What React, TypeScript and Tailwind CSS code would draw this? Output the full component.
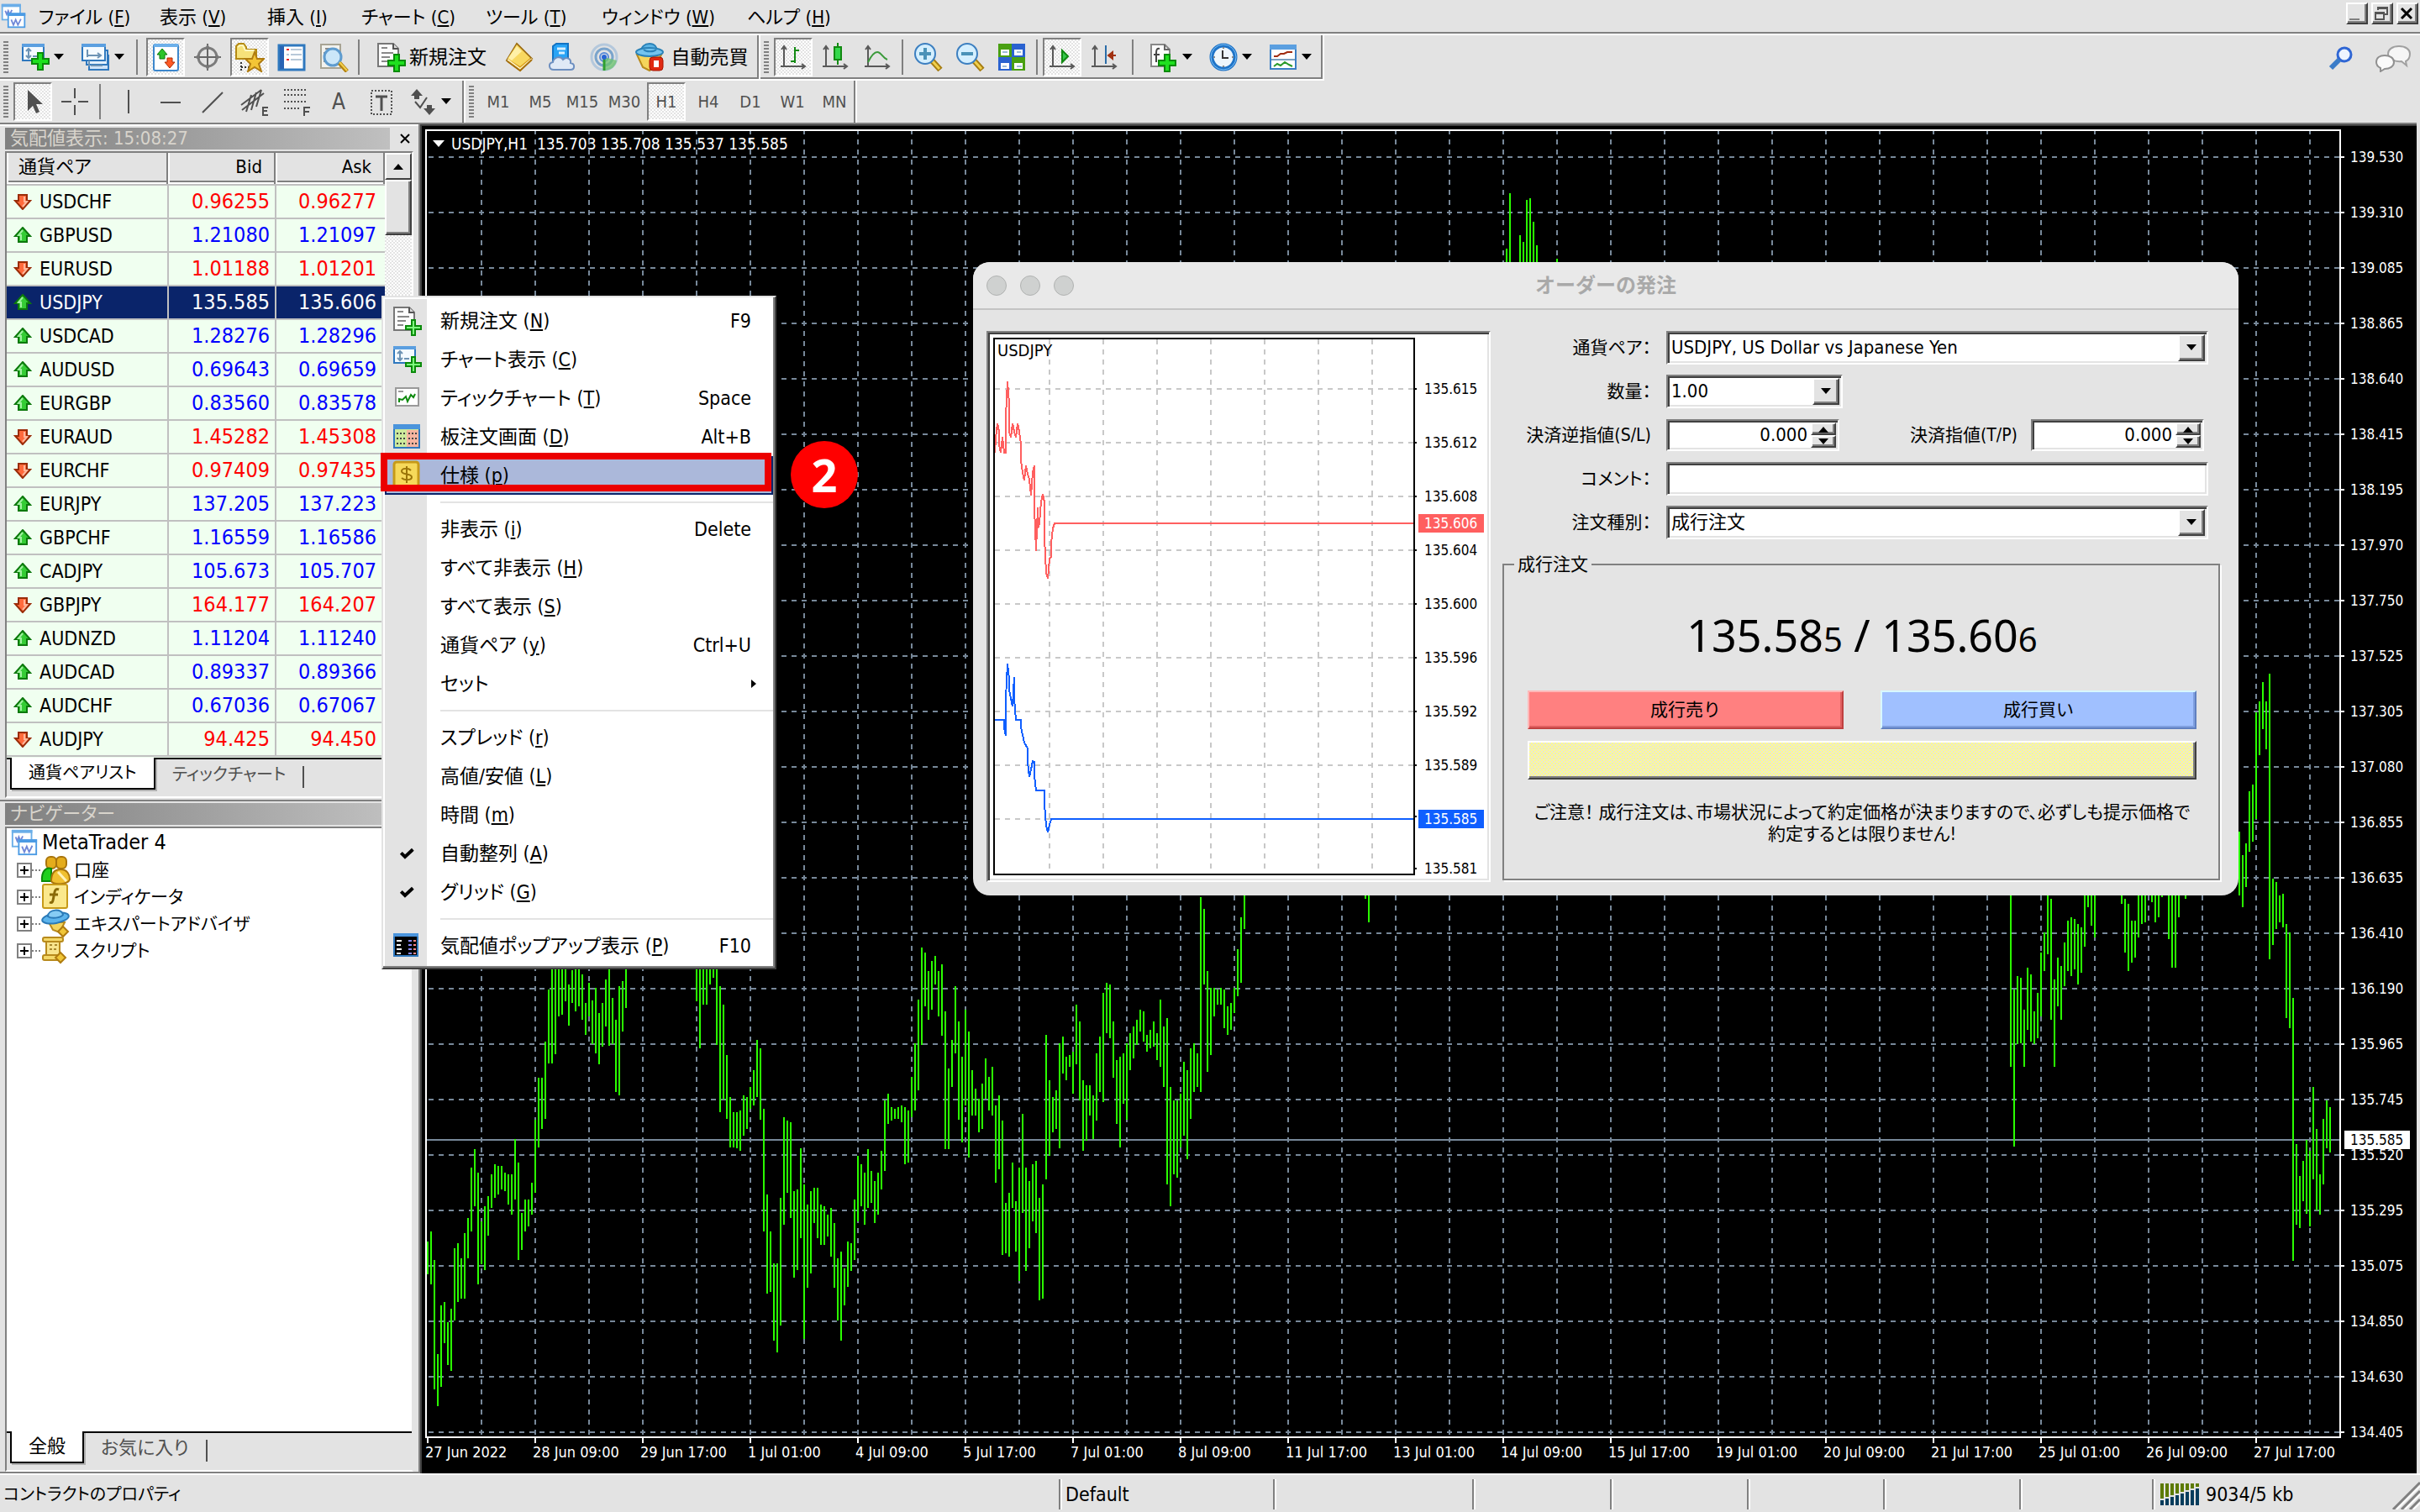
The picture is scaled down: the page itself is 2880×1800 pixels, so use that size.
import { useState } from 'react';
import type { ReactNode } from 'react';
import clsx from 'clsx';

type Quote = {
  symbol: string;
  bid: string;
  ask: string;
  up: boolean;
};

type MenuEntry = {
  label: string;
  hotkey?: string;
  shortcut?: string;
  icon?: ReactNode;
  active?: boolean;
  submenu?: boolean;
};

const quotes: Quote[] = [
  { symbol: 'USDCHF', bid: '0.96255', ask: '0.96277', up: false },
  { symbol: 'GBPUSD', bid: '1.21080', ask: '1.21097', up: true },
  { symbol: 'EURUSD', bid: '1.01188', ask: '1.01201', up: false },
  { symbol: 'USDJPY', bid: '135.585', ask: '135.606', up: true },
  { symbol: 'USDCAD', bid: '1.28276', ask: '1.28296', up: true },
  { symbol: 'AUDUSD', bid: '0.69643', ask: '0.69659', up: true },
  { symbol: 'EURGBP', bid: '0.83560', ask: '0.83578', up: true },
  { symbol: 'EURAUD', bid: '1.45282', ask: '1.45308', up: false },
  { symbol: 'EURCHF', bid: '0.97409', ask: '0.97435', up: false },
  { symbol: 'EURJPY', bid: '137.205', ask: '137.223', up: true },
  { symbol: 'GBPCHF', bid: '1.16559', ask: '1.16586', up: true },
  { symbol: 'CADJPY', bid: '105.673', ask: '105.707', up: true },
  { symbol: 'GBPJPY', bid: '164.177', ask: '164.207', up: false },
  { symbol: 'AUDNZD', bid: '1.11204', ask: '1.11240', up: true },
  { symbol: 'AUDCAD', bid: '0.89337', ask: '0.89366', up: true },
  { symbol: 'AUDCHF', bid: '0.67036', ask: '0.67067', up: true },
  { symbol: 'AUDJPY', bid: '94.425', ask: '94.450', up: false },
];

const prices = [
  '139.530', '139.310', '139.085', '138.865', '138.640', '138.415', '138.195', '137.970',
  '137.750', '137.525', '137.305', '137.080', '136.855', '136.635', '136.410', '136.190',
  '135.965', '135.745', '135.520', '135.295', '135.075', '134.850', '134.630', '134.405',
];

const times = [
  '27 Jun 2022', '28 Jun 09:00', '29 Jun 17:00', '1 Jul 01:00', '4 Jul 09:00', '5 Jul 17:00',
  '7 Jul 01:00', '8 Jul 09:00', '11 Jul 17:00', '13 Jul 01:00', '14 Jul 09:00', '15 Jul 17:00',
  '19 Jul 01:00', '20 Jul 09:00', '21 Jul 17:00', '25 Jul 01:00', '26 Jul 09:00', '27 Jul 17:00',
];

// high-low pairs, one bar every 4 units; "x" is the first bar, y = base + value / scale
const barRuns = [
  {
    x: 509, base: 1050, scale: 2.24,
    bars: '959-1047 932-1074 1007-1353 1258-1397 1128-1347 1120-1230 1173-1289 1137-1303 977-1169 963-1119 1003-1110 936-1110 896-1004 762-932 712-864 775-1074 905-1020 865-1034 838-944 780-868 753-842 757-833 757-820 775-824 780-860 780-886 685-847 748-1007 882-981 847-932 847-918 802-886 635-829 523-708 523-658 426-631 287-483 230-484 230-460 230-358 230-353 230-318 273-384 236-322 230-345 230-331 246-367 322-407 269-358 316-433 282-457 349-487 322-438 260-385 230-437 309-432 367-560 278-569 264-398 200-335',
  },
  {
    x: 829, base: 1050, scale: 2.24,
    bars: '200-318 200-443 200-327 200-327 200-273 200-255 200-434 278-613 327-581 461-632 573-707 613-707 613-711 609-717 569-676 573-658 547-605 501-596 421-573 443-635 604-932 833-1097 932-1092 1018-1223 1018-1254 842-1183 627-914 636-829 640-895 824-1056 820-1034 711-950 806-1219 860-1083 824-1043 815-909 815-950 860-968 865-968 887-945 869-998 909-1083 1003-1169 986-1222 1030-1129 959-1079 963-1038 847-1007 730-905 753-864 775-914 712-869 770-855 797-909 775-886 717-820 582-770 564-645 600-636 605-631 600-631 596-640 600-753 609-748 519-627 430-609 314-555 175-434 188-331 237-367 211-340 197-273 237-358 220-411 345-712 497-712 421-546 278-457 372-635 465-694 340-595 399-735 502-623 551-623 578-667 538-658 470-578 519-609 492-623 596-802 569-766 636-994 855-990 829-998 748-869 851-986 762-1065 618-882 762-1038 797-977 753-905 744-936 842-1115 806-1110 408-793 529-730 573-667 555-658 430-711 412-510 465-528 461-492 452-564 327-487 372-582 529-717 542-690 542-623 569-685 457-636 412-560 296-586 269-403 273-416 372-523 475-645 465-708 457-591 430-635 403-502 385-470 367-434 340-399 345-426 408-452 394-444 372-438 403-475 314-493 385-547 363-806 547-865 582-780 582-788 564-708 479-676 501-739 443-631 430-560 457-546 40-560 72-273 237-506 282-461 282-358 287-327 282-327 287-390 331-407 322-394 282-349 179-304 94-269 20-125',
  },
  { x: 1625, base: 1050, scale: 1, bars: '10-20 10-48' },
  { x: 1793, base: 200, scale: 3, bars: '288-350 90-350' },
  { x: 1809, base: 200, scale: 3, bars: '240-350 264-350 114-350 108-350 192-350 276-350' },
  { x: 1853, base: 200, scale: 3, bars: '324-350' },
  {
    x: 2393, base: 700, scale: 1.4255,
    bars: '500-812 681-948 659-774 661-773 716-812 644-750 656-770 718-774 687-764 619-727 585-650 500-621 527-733 664-812 627-710 641-733 602-676 564-650 559-658 562-647 570-673 576-653 500-609 500-542 500-573 500-593',
  },
  { x: 2525, base: 700, scale: 1.4255, bars: '500-536 527-619 536-650 564-636 564-627 500-593 500-570 500-567 500-510 500-533 500-567 500-559 500-524 500-510 500-596 500-644 500-644 500-559 500-510 500-527' },
  {
    x: 2665, base: 700, scale: 1.4255,
    bars: '413-522 453-542 433-507 345-447 334-430 211-392 192-284 160-239 192-273 145-630 493-606 499-579 522-567 519-576 570-730 585-747 696-1142 944-1080 998-1086 972-1041 936-1062 955-1083 847-1004 918-1056 995-1063 901-1012 870-951 881-958',
  },
];

const askTicks =
  '83,481 85,446 90,410 95,430 96,461 100,481 105,442 110,481 115,481 115,394 120,310 124,362 125,430 130,445 135,410 140,430 145,445 149,410 155,430 159,461 160,498 165,528 169,546 173,511 178,530 183,544 188,582 193,527 198,511 199,614 203,716 208,611 209,662 213,650 218,598 222,579 227,600 228,683 233,767 238,783 242,733 247,730 247,697 252,662 257,649 1304,649';
const bidTicks =
  '83,1120 110,1120 110,1137 115,1157 116,1068 120,985 125,1021 125,1050 130,1068 135,1088 139,1018 140,1068 145,1120 159,1120 160,1138 165,1156 170,1174 178,1188 179,1222 184,1256 189,1238 193,1218 198,1220 199,1254 203,1289 227,1289 228,1323 233,1374 238,1390 243,1372 247,1357 1304,1357';

const toTickPoints = (raw: string) =>
  raw
    .split(' ')
    .map((p) => {
      const [x, y] = p.split(',').map(Number);
      return `${Math.round(x / 2.45 - 34)},${Math.round(y / 2.0103 - 104)}`;
    })
    .join(' ');

/* ---------- icons ---------- */

const Svg = ({ size = 36, children }: { size?: number; children: ReactNode }) => (
  <svg width={size} height={size} viewBox="0 0 36 36" fill="none" className="shrink-0" aria-hidden="true">
    {children}
  </svg>
);

const Plus = ({ x, y, light }: { x: number; y: number; light?: boolean }) => (
  <path
    transform={`translate(${x} ${y})`}
    d={light ? 'M7 0h4v7h7v4h-7v7H7v-7H0V7h7z' : 'M7 0h6v7h7v6h-7v7H7v-7H0V7h7z'}
    fill={light ? '#7dff7d' : '#1fe01f'}
    stroke="#0a8a0a"
    strokeWidth="2"
  />
);

const WindowsIcon = ({ size = 36 }: { size?: number }) => (
  <Svg size={size}>
    <rect x="3" y="3" width="24" height="20" fill="#fff" stroke="#6aaee8" strokeWidth="2" />
    <path d="M2 4h26" stroke="#6aaee8" strokeWidth="4" />
    <path d="M7 11l2 5 2-5 2 5 3-6" stroke="#7088d8" strokeWidth="2" />
    <rect x="11" y="15" width="22" height="18" fill="#fff" stroke="#4c9be4" strokeWidth="2" />
    <path d="M10 16h24" stroke="#4c9be4" strokeWidth="4" />
    <path d="M15 23l3 7 3-7 3 7 4-8" stroke="#7088d8" strokeWidth="2" />
  </Svg>
);

const NewChartIcon = ({ light }: { light?: boolean }) => (
  <Svg>
    <rect x="3" y="3" width="25" height="19" fill="#f4faff" stroke="#2f78be" strokeWidth="2" />
    <path d="M2 4h27" stroke="#5b9fe0" strokeWidth="4" />
    <path d="M10 8v11M7 11l3-3 3 3M7 16l3 3 3-3M15 17h6" stroke="#6d93b4" strokeWidth="2" />
    <Plus x={light ? 17 : 14} y={light ? 15 : 13} light={light} />
  </Svg>
);

const ProfilesIcon = () => (
  <Svg>
    <rect x="10" y="16" width="23" height="17" fill="#cfe4f8" stroke="#2f78be" strokeWidth="2" />
    <rect x="7" y="10" width="25" height="17" fill="#e2f0fc" stroke="#2f78be" strokeWidth="2" />
    <rect x="2" y="3" width="27" height="19" fill="#f4faff" stroke="#2f78be" strokeWidth="2" />
    <path d="M1 4h29" stroke="#5b9fe0" strokeWidth="4" />
    <path d="M8 9v9M8 16h15M20 13l4 3-4 3M10 22v7M12 28h14" stroke="#6d93b4" strokeWidth="2" />
  </Svg>
);

const MarketIcon = () => (
  <Svg>
    <rect x="4" y="3" width="29" height="31" rx="2" fill="#fff" stroke="#3d87cc" strokeWidth="2" />
    <path d="M4 4h29" stroke="#6cb0ea" strokeWidth="4" />
    <path d="M14 8l6 7h-3v5h-6v-5H8z" fill="#2cc42c" stroke="#0a7a0a" />
    <path d="M23 31l-6-7h3v-5h6v5h3z" fill="#ff5a26" stroke="#b02a00" />
  </Svg>
);

const TargetIcon = () => (
  <Svg>
    <circle cx="18" cy="18" r="11" stroke="#7c7c7c" strokeWidth="3" />
    <path d="M18 2v32M2 18h32" stroke="#666" strokeWidth="2" />
    <path d="M18 2l3 6h-6zM18 34l3-6h-6zM2 18l6-3v6zM34 18l-6-3v6z" fill="#777" />
  </Svg>
);

const FavoritesIcon = () => (
  <Svg>
    <path d="M2 20V5l3-3h6l3 4v3h12v11z" fill="#f6e27a" stroke="#b48a14" strokeWidth="2" />
    <path d="M4 6l3-2h3l3 6h11" stroke="#fff7c0" strokeWidth="2" />
    <path d="M8 24v10M8 30h10" stroke="#333" strokeWidth="2" strokeDasharray="2 2" />
    <path d="M24 12l3 8h8l-6 6 3 9-8-5-8 5 3-9-6-6h8z" fill="#f3c536" stroke="#b07c10" strokeWidth="2" />
  </Svg>
);

const NotebookIcon = () => (
  <Svg>
    <rect x="3" y="4" width="30" height="29" fill="#fff" stroke="#2f78be" strokeWidth="3" />
    <rect x="4" y="5" width="5" height="27" fill="#2863b4" />
    <path d="M12 9h3M12 21h3" stroke="#e22" strokeWidth="2" />
    <path d="M17 9h13M17 15h13M17 21h13M12 15h3" stroke="#b8c8d8" strokeWidth="2" />
  </Svg>
);

const TesterIcon = () => (
  <Svg>
    <rect x="3" y="3" width="23" height="28" fill="#f2f2ee" stroke="#a8a494" strokeWidth="2" />
    <path d="M7 12v12M8 8h10" stroke="#8a8a8a" strokeWidth="2" />
    <circle cx="17" cy="18" r="10" fill="#c6e6fa" fillOpacity=".9" stroke="#5f9ccf" strokeWidth="3" />
    <path d="M25 25l9 10" stroke="#b4820e" strokeWidth="5" />
    <path d="M25 24l9 10" stroke="#f2d050" strokeWidth="2" />
  </Svg>
);

const NewOrderIcon = ({ light }: { light?: boolean }) => (
  <Svg>
    <path d="M3 2h18l6 6v21H3z" fill="#fcfcfc" stroke="#777" strokeWidth="2" />
    <path d="M21 2v6h6" fill="#ddd" stroke="#555" strokeWidth="2" />
    <path d="M7 7h7M7 13h14M7 18h10M7 23h7" stroke="#888" strokeWidth="2" />
    <Plus x={light ? 17 : 15} y={light ? 17 : 15} light={light} />
  </Svg>
);

const BookIcon = () => (
  <Svg>
    <path d="M14 2l18 18-14 14L2 22z" fill="#d89a14" stroke="#9a6a10" strokeWidth="2" />
    <path d="M14 3l16 16-12 10L3 20z" fill="#f8d860" />
    <path d="M14 5l6 6-12 11-4-3z" fill="#fff0a8" />
    <path d="M3 21l15 11 14-12" stroke="#fff3c0" strokeWidth="2" />
    <path d="M3 23l15 11 14-13" stroke="#a8700c" strokeWidth="2" />
  </Svg>
);

const CloudIcon = () => (
  <Svg>
    <path d="M7 5l4-3h14v20H7z" fill="#29a4f6" stroke="#1273c4" strokeWidth="2" />
    <path d="M12 8h10M14 13h7" stroke="#d8f0ff" strokeWidth="3" />
    <path d="M8 33c-6 0-7-8-1-9 1-6 9-8 12-3 4-4 10-1 9 4 6 1 5 8 0 8z" fill="#dfe9f6" stroke="#6d8fc0" strokeWidth="2" />
  </Svg>
);

const SignalIcon = () => (
  <Svg>
    <circle cx="18" cy="18" r="15" stroke="#b4c8dc" strokeWidth="3" />
    <circle cx="18" cy="18" r="10" stroke="#7aa4cc" strokeWidth="3" />
    <circle cx="18" cy="18" r="5" stroke="#5a8cd8" strokeWidth="2" />
    <path d="M18 18v16c8 0 14-5 15-12z" fill="#6cc46c" fillOpacity=".75" />
    <path d="M18 18v16" stroke="#2fa02f" strokeWidth="3" />
    <circle cx="18" cy="18" r="3" fill="#2a66d4" />
  </Svg>
);

const AutoTradeIcon = () => (
  <Svg>
    <path d="M3 15h29l-5 12-9 7-8-4z" fill="#f5d55c" stroke="#b88a1c" strokeWidth="2" />
    <path d="M8 11c0-5 4-9 10-9s9 4 9 9" fill="#5cb4e4" stroke="#2a82b8" strokeWidth="2" />
    <ellipse cx="18" cy="12" rx="16" ry="5" fill="#74c4ee" stroke="#2a82b8" strokeWidth="2" />
    <path d="M11 9c3 3 12 3 15 0" stroke="#2a82b8" strokeWidth="2" />
    <rect x="18" y="18" width="16" height="16" rx="4" fill="#e02a12" stroke="#a81400" />
    <rect x="23" y="22" width="6" height="8" fill="#fff" />
  </Svg>
);

const Axes = () => (
  <path d="M7 6v24M4 9l3-4 3 4M3 29h28M28 26l4 3-4 3" stroke="#595959" strokeWidth="2" />
);

const BarChartIcon = () => (
  <Svg>
    <Axes />
    <path d="M20 6v19M20 10h5M15 23h5" stroke="#128a12" strokeWidth="2" />
  </Svg>
);

const CandleIcon = () => (
  <Svg>
    <Axes />
    <path d="M21 1v26" stroke="#128a12" strokeWidth="2" />
    <rect x="17" y="6" width="8" height="15" fill="#35d84c" stroke="#128a12" strokeWidth="2" />
  </Svg>
);

const LineChartIcon = () => (
  <Svg>
    <Axes />
    <path d="M7 24c4-8 7-12 11-12 5 0 6 7 12 9" stroke="#3a9a3a" strokeWidth="2" />
  </Svg>
);

const ZoomIcon = ({ plus }: { plus?: boolean }) => (
  <Svg>
    <path d="M23 22l10 11" stroke="#a67c10" strokeWidth="7" />
    <path d="M23 22l9 10" stroke="#f0cf4c" strokeWidth="3" />
    <circle cx="15" cy="14" r="12" fill="#d4efff" stroke="#3c7fc0" strokeWidth="2" />
    <path d={plus ? 'M8 14h14M15 7v14' : 'M8 14h14'} stroke="#4a92b8" strokeWidth="4" />
  </Svg>
);

const TileIcon = () => (
  <Svg>
    <rect x="2" y="2" width="16" height="16" fill="#49a012" />
    <rect x="18" y="2" width="16" height="16" fill="#2a62d0" />
    <rect x="2" y="18" width="16" height="16" fill="#2a62d0" />
    <rect x="18" y="18" width="16" height="16" fill="#49a012" />
    <path d="M5 9h10v7H5zM21 9h10v7H21zM5 25h10v7H5zM21 25h10v7H21z" fill="#fff" />
    <path d="M7 12h6M24 12h5M7 29h5M24 29h6" stroke="#9cbcd8" strokeWidth="2" />
  </Svg>
);

const ScrollIcon = () => (
  <Svg>
    <Axes />
    <path d="M18 10v14l7-7z" fill="#35c84c" stroke="#128a12" strokeWidth="2" />
  </Svg>
);

const ShiftIcon = () => (
  <Svg>
    <Axes />
    <path d="M20 4v22" stroke="#2a6ca8" strokeWidth="2" />
    <path d="M32 16h-8M28 12l-5 4 5 4z" fill="#c03a10" stroke="#a03010" strokeWidth="2" />
  </Svg>
);

const IndicatorsIcon = () => (
  <Svg>
    <path d="M3 3h16l6 6v20H3z" fill="#fcfcfc" stroke="#888" strokeWidth="2" />
    <path d="M19 3v6h6" stroke="#666" strokeWidth="2" />
    <path d="M13 8c-4-1-4 3-4 6v10M6 15h7" stroke="#444" strokeWidth="2" />
    <Plus x={12} y={15} />
  </Svg>
);

const ClockIcon = () => (
  <Svg>
    <circle cx="18" cy="18" r="14" fill="#eef6fc" stroke="#1f74c8" strokeWidth="5" />
    <circle cx="18" cy="18" r="15" stroke="#7cc0f6" />
    <path d="M17 10v9h7" stroke="#333" strokeWidth="2" />
    <path d="M18 6v2M18 28v2M6 18h2M28 18h2" stroke="#888" strokeWidth="2" />
  </Svg>
);

const TemplateIcon = () => (
  <Svg>
    <rect x="3" y="4" width="30" height="28" fill="#fff" stroke="#3a7fc4" strokeWidth="2" />
    <path d="M2 6h32" stroke="#5b9fe0" strokeWidth="6" />
    <path d="M4 21h28" stroke="#7aa0c0" strokeWidth="2" />
    <path d="M7 17h4l4-3h4l4-2h6" stroke="#a02c10" strokeWidth="2" />
    <path d="M7 29l4-3 4 2 5-4 5 3 4 2" stroke="#2a9a2a" strokeWidth="2" />
  </Svg>
);

const TickIcon = () => (
  <Svg>
    <rect x="5" y="6" width="27" height="21" fill="#fff" stroke="#999" strokeWidth="2" />
    <path d="M8 10h6" stroke="#999" strokeWidth="2" />
    <path d="M9 23v-4l4 1 4-4 2 6 4-8 3 3 2-4" stroke="#0f8a0f" strokeWidth="2" />
  </Svg>
);

const DepthIcon = () => (
  <Svg>
    <rect x="3" y="4" width="30" height="27" fill="#cdeb9c" stroke="#2f78be" strokeWidth="2" />
    <rect x="18" y="10" width="14" height="20" fill="#f6b4a0" />
    <path d="M2 6h32" stroke="#4a94dc" strokeWidth="6" />
    <path d="M6 14h10M6 20h10M6 26h10M20 14h10M20 20h10M20 26h10" stroke="#444" strokeWidth="2" strokeDasharray="2 2" />
  </Svg>
);

const SpecIcon = () => (
  <Svg>
    <rect x="3" y="2" width="29" height="31" rx="3" fill="#f6d95a" stroke="#c79a18" strokeWidth="3" />
    <path d="M23 12c-3-3-11-3-11 1 0 5 12 2 12 7 0 4-9 4-12 1M18 7v20" stroke="#9a7408" strokeWidth="2" />
  </Svg>
);

const PopupIcon = () => (
  <Svg>
    <rect x="3" y="4" width="28" height="26" fill="#000" stroke="#2f78be" strokeWidth="2" />
    <path d="M2 5h30" stroke="#4a94dc" strokeWidth="4" />
    <path d="M6 12h6M6 17h5M6 22h6M6 27h5" stroke="#fff" strokeWidth="2" />
    <path d="M20 12h4M20 17h4M20 22h4M20 27h4" stroke="#8c8cff" strokeWidth="2" />
    <path d="M26 12h3M26 17h3M26 22h3M26 27h3" stroke="#f88" strokeWidth="2" />
  </Svg>
);

const CheckIcon = () => (
  <Svg size={24}>
    <path d="M8 17l7 7L29 11" stroke="#000" strokeWidth="6" />
  </Svg>
);

const AccountsIcon = () => (
  <Svg>
    <rect x="7" y="2" width="12" height="14" rx="5" fill="#e4ac1c" stroke="#a8740c" strokeWidth="2" />
    <rect x="19" y="2" width="12" height="14" rx="5" fill="#e4ac1c" stroke="#a8740c" strokeWidth="2" />
    <path d="M2 31c-1-12 5-17 11-15v15z" fill="#1fd01f" stroke="#0a8a0a" strokeWidth="2" />
    <path d="M13 31c0-8 3-14 11-14s11 6 11 12c-2 6-19 7-22 2z" fill="#f0c030" stroke="#a8740c" strokeWidth="2" />
    <path d="M21 20l10 11" stroke="#fff2b8" strokeWidth="3" />
  </Svg>
);

const FunctionIcon = () => (
  <Svg>
    <rect x="3" y="3" width="29" height="28" rx="2" fill="#fbe88c" stroke="#c79a18" strokeWidth="2" />
    <path d="M22 9c-5-2-5 3-6 8s-1 9-5 7M11 15h10" stroke="#8a6a08" strokeWidth="3" />
  </Svg>
);

const ExpertIcon = () => (
  <Svg>
    <path d="M10 16l5 9 8 3 6-12z" fill="#f5d55c" stroke="#b88a1c" strokeWidth="2" />
    <ellipse cx="18" cy="11" rx="16" ry="6" fill="#5cb4ec" stroke="#2a7ab8" strokeWidth="2" transform="rotate(-10 18 11)" />
    <path d="M9 9c0-9 17-10 18-2-3 4-14 5-18 2z" fill="#86ccf4" stroke="#2a7ab8" strokeWidth="2" />
    <path d="M27 21l6 6-6 6-6-6z" fill="#f0c638" stroke="#b07c10" strokeWidth="2" />
  </Svg>
);

const ScriptIcon = () => (
  <Svg>
    <path d="M7 6h16v18H7z" fill="#f8e48c" stroke="#b88a1c" strokeWidth="2" />
    <rect x="3" y="2" width="24" height="5" rx="2" fill="#f4d868" stroke="#b88a1c" strokeWidth="2" />
    <rect x="3" y="23" width="20" height="6" rx="2" fill="#f4d868" stroke="#b88a1c" strokeWidth="2" />
    <path d="M11 11h3M17 11h3M11 16h3M16 16h3" stroke="#a8882c" strokeWidth="2" />
    <path d="M24 20l6 6-6 6-6-6z" fill="#f0c638" stroke="#b07c10" strokeWidth="2" />
  </Svg>
);

const ArrowMark = ({ up }: { up: boolean }) => (
  <svg width="22" height="20" viewBox="0 0 22 20" aria-hidden="true" className={up ? undefined : 'rotate-180'}>
    <path d="M11 1l9 10h-4v7H6v-7H2z" fill={up ? '#35cc35' : '#ff6a3c'} stroke={up ? '#0c780c' : '#9a2c08'} strokeWidth="2" />
    <path d="M11 4l-5 6 3 0v6" stroke={up ? '#a0f0a0' : '#ffb89c'} strokeWidth="2" fill="none" />
  </svg>
);

const Caret = ({ className }: { className?: string }) => (
  <svg width="12" height="8" viewBox="0 0 12 8" aria-hidden="true" className={clsx('shrink-0', className)}>
    <path d="M0 0h12L6 7z" fill="#000" />
  </svg>
);

/* ---------- toolbars ---------- */

const Hotkeyed = ({ label, hotkey }: { label: string; hotkey?: string }) => (
  <span className="[font-feature-settings:'palt']">
    {label}
    {hotkey && (
      <>
        {' ('}
        <u className="decoration-2 underline-offset-2">{hotkey}</u>)
      </>
    )}
  </span>
);

const Grip = () => (
  <div className="w-[6px] h-[38px] mx-1 shrink-0 bg-[repeating-linear-gradient(#808080_0_2px,transparent_2px_4px)]" />
);

const Divider = ({ className }: { className?: string }) => (
  <div className={clsx('w-[2px] h-[42px] shrink-0 bg-[#808080]', className)} />
);

const ToolButton = ({
  label,
  pressed,
  className = 'w-[50px]',
  onClick,
  children,
}: {
  label: string;
  pressed?: boolean;
  className?: string;
  onClick?: () => void;
  children: ReactNode;
}) => (
  <div className={clsx('h-[50px] shrink-0 flex items-center justify-center', className)}>
    <button
      aria-label={label}
      onClick={onClick}
      className={clsx(
        'h-[46px] flex items-center justify-center',
        pressed
          ? 'w-[46px] border-2 border-t-[#808080] border-l-[#808080] border-b-white border-r-white bg-[repeating-conic-gradient(#fff_0_25%,#e3e3e3_0_50%)] bg-[length:4px_4px]'
          : 'w-full'
      )}
    >
      {children}
    </button>
  </div>
);

const MenuBar = () => {
  const items = [
    { label: 'ファイル', hotkey: 'F', width: 'w-[144px]' },
    { label: '表示', hotkey: 'V', width: 'w-[128px]' },
    { label: '挿入', hotkey: 'I', width: 'w-[112px]' },
    { label: 'チャート', hotkey: 'C', width: 'w-[148px]' },
    { label: 'ツール', hotkey: 'T', width: 'w-[138px]' },
    { label: 'ウィンドウ', hotkey: 'W', width: 'w-[173px]' },
    { label: 'ヘルプ', hotkey: 'H', width: 'w-[144px]' },
  ];
  return (
    <nav className="h-[42px] shrink-0 flex items-center pt-[2px] border-b-2 border-white shadow-[inset_0_-2px_#808080]">
      <div className="w-[46px] -mt-1">
        <WindowsIcon size={32} />
      </div>
      {items.map((item) => (
        <button key={item.label} className={clsx('text-left whitespace-nowrap', item.width)}>
          <Hotkeyed label={item.label} hotkey={item.hotkey} />
        </button>
      ))}
      <div className="ml-auto mr-[2px] -mt-[10px] flex gap-1">
        {['最小化', '元に戻す', '閉じる'].map((label, i) => (
          <button
            key={label}
            aria-label={label}
            className="size-[26px] border-2 border-t-white border-l-white border-b-[#404040] border-r-[#404040] shadow-[inset_-2px_-2px_#808080]"
          >
            <svg width="20" height="20" viewBox="0 0 20 20" fill="none" aria-hidden="true">
              {i === 0 && <path d="M2 17h12" stroke="#808080" strokeWidth="2" />}
              {i === 1 && <path d="M6 6V3h11v8h-3M6 4h11M3 9h10v8H3zM3 10h10" stroke="#555" strokeWidth="2" />}
              {i === 2 && <path d="M4 4l12 12M16 4L4 16" stroke="#000" strokeWidth="3" />}
            </svg>
          </button>
        ))}
      </div>
    </nav>
  );
};

const Toolbar = () => (
  <div className="flex items-center h-[54px] shrink-0">
    <div className="flex items-center w-[1576px] h-full border-b-2 border-r-2 border-white shadow-[inset_-2px_-2px_#808080]">
      <Grip />
      <ToolButton label="新規チャート" className="w-[72px]">
        <NewChartIcon />
        <Caret className="ml-1" />
      </ToolButton>
      <ToolButton label="プロファイル" className="w-[72px]">
        <ProfilesIcon />
        <Caret className="ml-1" />
      </ToolButton>
      <Divider className="ml-1 mr-2" />
      <ToolButton label="気配値表示" pressed><MarketIcon /></ToolButton>
      <ToolButton label="データウィンドウ"><TargetIcon /></ToolButton>
      <ToolButton label="ナビゲーター" pressed><FavoritesIcon /></ToolButton>
      <ToolButton label="ターミナル"><NotebookIcon /></ToolButton>
      <ToolButton label="ストラテジーテスター"><TesterIcon /></ToolButton>
      <Divider className="mx-1" />
      <ToolButton label="新規注文" className="w-[162px] text-[23px]">
        <NewOrderIcon />
        <span className="ml-1 whitespace-nowrap">新規注文</span>
      </ToolButton>
      <ToolButton label="メタエディター"><BookIcon /></ToolButton>
      <ToolButton label="MQL5"><CloudIcon /></ToolButton>
      <ToolButton label="シグナル"><SignalIcon /></ToolButton>
      <ToolButton label="自動売買" className="w-[157px] text-[23px]">
        <AutoTradeIcon />
        <span className="ml-2 whitespace-nowrap">自動売買</span>
      </ToolButton>
      <div className="w-1 h-full shrink-0 bg-[#808080] border-r-2 border-white" />
      <Grip />
      <ToolButton label="バーチャート" pressed><BarChartIcon /></ToolButton>
      <ToolButton label="ローソク足"><CandleIcon /></ToolButton>
      <ToolButton label="ラインチャート"><LineChartIcon /></ToolButton>
      <Divider className="mx-1" />
      <ToolButton label="ズームイン"><ZoomIcon plus /></ToolButton>
      <ToolButton label="ズームアウト"><ZoomIcon /></ToolButton>
      <ToolButton label="ウィンドウの整列"><TileIcon /></ToolButton>
      <Divider className="mx-1" />
      <ToolButton label="自動スクロール" pressed><ScrollIcon /></ToolButton>
      <ToolButton label="チャートシフト"><ShiftIcon /></ToolButton>
      <Divider className="mx-2" />
      <ToolButton label="インディケータ" className="w-[71px]">
        <IndicatorsIcon />
        <Caret className="ml-1" />
      </ToolButton>
      <ToolButton label="時間足設定" className="w-[71px]">
        <ClockIcon />
        <Caret className="ml-1" />
      </ToolButton>
      <ToolButton label="定型チャート" className="w-[71px]">
        <TemplateIcon />
        <Caret className="ml-1" />
      </ToolButton>
    </div>
    <div className="ml-auto mr-[10px] flex items-center gap-6">
      <button aria-label="検索">
        <svg width="32" height="32" viewBox="0 0 32 32" fill="none" aria-hidden="true">
          <circle cx="20" cy="12" r="8" fill="#eef4ff" stroke="#2f66d4" strokeWidth="3" />
          <path d="M14 18L4 28" stroke="#3a7cc8" strokeWidth="6" />
        </svg>
      </button>
      <button aria-label="チャット">
        <svg width="44" height="34" viewBox="0 0 44 34" fill="none" aria-hidden="true">
          <path d="M29 3c8 0 13 4 13 9s-3 8-5 9l1 5-6-5c-9 1-16-4-16-9s5-9 13-9z" fill="#f6f6f6" stroke="#a0a0a0" strokeWidth="2" />
          <path d="M12 14c6 0 11 3 11 8s-5 8-11 8l-5 3v-4c-4-2-5-4-5-7 0-5 4-8 10-8z" fill="#fafafa" stroke="#909090" strokeWidth="2" />
        </svg>
      </button>
    </div>
  </div>
);

const timeframes = ['M1', 'M5', 'M15', 'M30', 'H1', 'H4', 'D1', 'W1', 'MN'];

const LineToolbar = () => {
  const [frame, setFrame] = useState('H1');
  return (
    <div className="flex h-[50px] shrink-0 text-[#505050]">
      <div className="flex items-center w-[1020px] border-r-2 border-white shadow-[inset_-2px_0_#808080]">
        <Grip />
        <ToolButton label="カーソル" pressed>
          <Svg><path d="M12 4v25l6-6 4 9 4-2-4-9h8z" fill="#505050" /></Svg>
        </ToolButton>
        <ToolButton label="十字カーソル">
          <Svg><path d="M18 2v12M18 22v12M2 18h12M22 18h12" stroke="#505050" strokeWidth="2" /></Svg>
        </ToolButton>
        <Divider className="ml-1 mr-2" />
        <ToolButton label="垂直線">
          <Svg><path d="M18 4v28" stroke="#505050" strokeWidth="2" /></Svg>
        </ToolButton>
        <ToolButton label="水平線">
          <Svg><path d="M6 19h24" stroke="#505050" strokeWidth="2" /></Svg>
        </ToolButton>
        <ToolButton label="トレンドライン">
          <Svg><path d="M6 31L30 7" stroke="#505050" strokeWidth="2" /></Svg>
        </ToolButton>
        <ToolButton label="チャネル">
          <Svg>
            <path d="M2 22L26 4M3 28L29 8M8 30l6-20M14 28l6-21M20 24l6-20" stroke="#505050" strokeWidth="2" />
            <path d="M34 25h-6v9h6M28 29h5" stroke="#505050" strokeWidth="2" />
          </Svg>
        </ToolButton>
        <ToolButton label="フィボナッチ">
          <Svg>
            <path d="M3 4h28M3 10h28M3 18h28M3 26h20" stroke="#505050" strokeWidth="2" strokeDasharray="2 2" />
            <path d="M34 25h-7v10M27 30h6" stroke="#505050" strokeWidth="2" />
          </Svg>
        </ToolButton>
        <ToolButton label="テキスト"><span className="text-[26px]">A</span></ToolButton>
        <ToolButton label="テキストラベル">
          <Svg>
            <rect x="7" y="5" width="24" height="28" stroke="#505050" strokeWidth="2" strokeDasharray="2 2" />
            <path d="M12 12h14M19 12v17" stroke="#505050" strokeWidth="3" />
          </Svg>
        </ToolButton>
        <ToolButton label="矢印" className="w-[66px]">
          <Svg>
            <path d="M11 3l7 8h-4v4H8v-4H4zM26 34l-7-8h4v-4h6v4h4z" fill="#505050" />
            <path d="M9 18l6 7 8-12" stroke="#505050" strokeWidth="2" />
          </Svg>
          <Caret className="ml-1" />
        </ToolButton>
        <div className="w-1 h-full ml-auto shrink-0 bg-[#808080] border-r-2 border-white" />
        <Grip />
        {timeframes.map((tf) => (
          <ToolButton key={tf} label={tf} pressed={tf === frame} onClick={() => setFrame(tf)}>
            <span className="text-[20px]">{tf}</span>
          </ToolButton>
        ))}
      </div>
    </div>
  );
};

/* ---------- left dock ---------- */

const PanelTitle = ({ children }: { children: ReactNode }) => (
  <div className="flex items-center mb-[2px]">
    <div className="w-[458px] h-[26px] px-[6px] flex items-center bg-linear-to-r from-[#808080] to-[#c0c0c0] text-[#d8d4cc] [font-feature-settings:'palt']">
      {children}
    </div>
    <button aria-label="閉じる" className="ml-3">
      <svg width="12" height="12" viewBox="0 0 12 12" aria-hidden="true">
        <path d="M1 1l10 10M11 1L1 11" stroke="#000" strokeWidth="2" />
      </svg>
    </button>
  </div>
);

const Tabs = ({ active, other, className }: { active: string; other: string; className?: string }) => (
  <div className={clsx("h-[46px] shrink-0 flex items-start border-t-2 border-black pl-1 bg-[#e3e3e3] [font-feature-settings:'palt']", className)}>
    <button className="h-[38px] -mt-[2px] px-5 bg-white border-2 border-t-0 border-black shadow-[2px_2px_#b0b0b0]">
      {active}
    </button>
    <button className="h-[36px] px-5 text-[#505050]">{other}</button>
    <div className="w-[2px] h-[26px] mt-2 bg-[#505050]" />
  </div>
);

const MarketWatch = () => (
  <section className="px-[6px] pt-1">
    <PanelTitle>気配値表示: 15:08:27</PanelTitle>
    <div className="w-[486px] border-2 border-t-[#808080] border-l-[#808080] border-b-white border-r-white">
      <div className="flex h-[720px] overflow-hidden bg-[#f0fff0]">
        <table className="w-[450px] h-[718px] table-fixed border-collapse text-[24px]">
          <colgroup>
            <col className="w-[192px]" />
            <col className="w-[128px]" />
            <col />
          </colgroup>
          <thead>
            <tr className="h-[38px] bg-[#e3e3e3] text-[22px]">
              {['通貨ペア', 'Bid', 'Ask'].map((h, i) => (
                <th
                  key={h}
                  className={clsx(
                    "font-normal h-[38px] p-0 pb-1 border-b-2 border-[#c0c0c0] [font-feature-settings:'palt'] shadow-[inset_-2px_0_#808080,inset_2px_0_#fff,inset_0_-2px_#fff,inset_0_-4px_#808080]",
                    i === 0 ? 'text-left pl-[14px]' : 'text-right pr-[16px]'
                  )}
                >
                  {h}
                </th>
              ))}
            </tr>
          </thead>
          <tbody>
            {quotes.map((q) => {
              const selected = q.symbol === 'USDJPY';
              const tone = selected ? 'text-white' : q.up ? 'text-[#0000ff]' : 'text-[#ff0000]';
              return (
                <tr key={q.symbol} className={clsx('h-[40px] border-b-2 border-[#c0c0c0]', selected && 'bg-[#0a246a]')}>
                  <td className={clsx('p-0 border-r-2 border-[#c0c0c0] text-[23px]', selected && 'text-white')}>
                    <div className="flex items-center gap-[9px] pl-2">
                      <ArrowMark up={q.up} />
                      {q.symbol}
                    </div>
                  </td>
                  <td className={clsx('p-0 pr-[6px] text-right border-r-2 border-[#c0c0c0] text-[25px]', tone)}>{q.bid}</td>
                  <td className={clsx('p-0 pr-[10px] text-right text-[25px]', tone)}>{q.ask}</td>
                </tr>
              );
            })}
          </tbody>
        </table>
        <div className="flex-1 bg-[repeating-conic-gradient(#fff_0_25%,#e3e3e3_0_50%)] bg-[length:4px_4px]">
          <button
            aria-label="上へ"
            className="w-full h-[32px] flex items-center justify-center bg-[#e3e3e3] border-2 border-t-white border-l-white border-b-[#404040] border-r-[#404040]"
          >
            <Caret className="rotate-180" />
          </button>
          <div className="h-[66px] bg-[#e3e3e3] border-2 border-t-white border-l-white border-b-[#404040] border-r-[#404040] shadow-[inset_-2px_-2px_#808080]" />
        </div>
      </div>
      <Tabs active="通貨ペアリスト" other="ティックチャート" className="text-[20px]" />
    </div>
  </section>
);

const Navigator = () => {
  const nodes = [
    { label: '口座', icon: <AccountsIcon /> },
    { label: 'インディケータ', icon: <FunctionIcon /> },
    { label: 'エキスパートアドバイザ', icon: <ExpertIcon /> },
    { label: 'スクリプト', icon: <ScriptIcon /> },
  ];
  return (
    <section className="flex-1 flex flex-col px-[6px] pt-[2px] mt-[2px] border-t-2 border-[#808080]">
      <PanelTitle>ナビゲーター</PanelTitle>
      <div className="w-[486px] flex-1 flex flex-col bg-white border-2 border-t-[#808080] border-l-[#808080] border-b-white border-r-[#e3e3e3]">
        <div className="flex-1">
          <div className="flex items-center gap-1 pl-1 h-[34px] text-[25px]">
            <WindowsIcon size={34} />
            MetaTrader 4
          </div>
          <ul>
            {nodes.map((node) => (
              <li key={node.label} className="h-[32px] pl-3 flex items-center text-[21px] [font-feature-settings:'palt']">
                <button aria-label={`${node.label}を開く`} className="size-[18px] border-2 border-[#808080] flex items-center justify-center">
                  <svg width="12" height="12" viewBox="0 0 12 12" aria-hidden="true">
                    <path d="M6 1v10M1 6h10" stroke="#000" strokeWidth="2" />
                  </svg>
                </button>
                <span className="w-[10px] border-t-2 border-dotted border-[#808080]" />
                {node.icon}
                <span className="ml-1">{node.label}</span>
              </li>
            ))}
          </ul>
        </div>
        <Tabs active="全般" other="お気に入り" />
      </div>
    </section>
  );
};

/* ---------- main chart ---------- */

const MainChart = () => (
  <main className="flex-1 min-w-0 flex flex-col bg-black text-white text-[18px] border-t-2 border-l-2 border-[#808080] shadow-[inset_2px_2px_#404040] pt-[6px] pl-[6px] mr-1">
    <div className="flex-1 flex min-h-0">
      <div className="relative flex-1 border-2 border-white">
        <svg className="absolute inset-0 w-full h-full" viewBox="508 156 2276 1554" preserveAspectRatio="none" shapeRendering="crispEdges" aria-hidden="true">
          <g stroke="#778899" strokeWidth="2" strokeDasharray="6 6">
            {prices.map((p, i) => (
              <path key={p} d={`M510 ${187 + i * 66}H2784`} />
            ))}
            {Array.from({ length: 35 }, (_, i) => (
              <path key={i} d={`M${573 + i * 64} 154V1710`} />
            ))}
          </g>
          <path d="M508 1357H2784" stroke="#778899" strokeWidth="2" />
          <g stroke="#2aff00" strokeWidth="2">
            {barRuns.map((run) =>
              run.bars.split(' ').map((bar, i) => {
                const [high, low] = bar.split('-').map((v) => Math.round(run.base + Number(v) / run.scale));
                return <path key={run.x + i * 4} d={`M${run.x + i * 4} ${high}V${low}`} />;
              })
            )}
          </g>
        </svg>
        <div className="relative flex items-center gap-2 pl-[7px] h-[30px] text-[19px]">
          <svg width="14" height="8" viewBox="0 0 14 8" aria-hidden="true">
            <path d="M0 0h14L7 8z" fill="#fff" />
          </svg>
          USDJPY,H1&nbsp; 135.703 135.708 135.537 135.585
        </div>
      </div>
      <div className="relative w-[90px] flex flex-col text-[17px]">
        {prices.map((p) => (
          <div key={p} className="h-[66px] shrink-0 flex items-center gap-[7px]">
            <span className="w-1 h-[2px] bg-white" />
            {p}
          </div>
        ))}
        <div className="absolute left-1 top-[1192px] w-[78px] h-[22px] pl-[7px] flex items-center bg-white text-black">135.585</div>
      </div>
    </div>
    <div className="h-[42px] shrink-0 flex pr-[72px] overflow-hidden">
      {times.map((t) => (
        <div key={t} className="w-[128px] shrink-0 whitespace-nowrap leading-[22px]">
          <div className="w-[2px] h-[6px] ml-[2px] bg-white" />
          {t}
        </div>
      ))}
    </div>
  </main>
);

/* ---------- context menu ---------- */

const menuGroups: MenuEntry[][] = [
  [
    { label: '新規注文', hotkey: 'N', shortcut: 'F9', icon: <NewOrderIcon light /> },
    { label: 'チャート表示', hotkey: 'C', icon: <NewChartIcon light /> },
    { label: 'ティックチャート', hotkey: 'T', shortcut: 'Space', icon: <TickIcon /> },
    { label: '板注文画面', hotkey: 'D', shortcut: 'Alt+B', icon: <DepthIcon /> },
    { label: '仕様', hotkey: 'p', icon: <SpecIcon />, active: true },
  ],
  [
    { label: '非表示', hotkey: 'i', shortcut: 'Delete' },
    { label: 'すべて非表示', hotkey: 'H' },
    { label: 'すべて表示', hotkey: 'S' },
    { label: '通貨ペア', hotkey: 'y', shortcut: 'Ctrl+U' },
    { label: 'セット', submenu: true },
  ],
  [
    { label: 'スプレッド', hotkey: 'r' },
    { label: '高値/安値', hotkey: 'L' },
    { label: '時間', hotkey: 'm' },
    { label: '自動整列', hotkey: 'A', icon: <CheckIcon /> },
    { label: 'グリッド', hotkey: 'G', icon: <CheckIcon /> },
  ],
  [{ label: '気配値ポップアップ表示', hotkey: 'P', shortcut: 'F10', icon: <PopupIcon /> }],
];

const ContextMenu = () => (
  <div className="absolute left-[454px] top-[352px] w-[470px]">
    <div
      role="menu"
      className="px-[2px] pt-[5px] pb-[3px] border-2 border-t-[#e3e3e3] border-l-[#e3e3e3] border-b-[#404040] border-r-[#404040] shadow-[inset_-2px_-2px_#808080,inset_2px_2px_#fff] bg-white bg-[linear-gradient(90deg,#e3e3e3_50px,#fff_50px)] bg-origin-content"
    >
      {menuGroups.map((group, g) => (
        <div key={g}>
          {g > 0 && (
            <div className="h-[18px] pl-[66px] flex items-center">
              <div className="h-[2px] w-full bg-[#e3e3e3]" />
            </div>
          )}
          {group.map((item) => (
            <button
              key={item.label}
              role="menuitem"
              className={clsx(
                'w-full h-[46px] flex items-center pr-[26px] text-left text-[23px]',
                item.active && 'bg-[#abb8da] outline-2 -outline-offset-2 outline-[#0a246a]'
              )}
            >
              <span className="w-[66px] shrink-0 flex justify-center pr-[14px]">{item.icon}</span>
              <Hotkeyed label={item.label} hotkey={item.hotkey} />
              <span className="ml-auto">{item.shortcut}</span>
              {item.submenu && (
                <svg width="8" height="12" viewBox="0 0 8 12" className="-mr-[8px]" aria-hidden="true">
                  <path d="M0 1l6 5-6 5z" fill="#000" />
                </svg>
              )}
            </button>
          ))}
        </div>
      ))}
    </div>
    <div className="absolute -left-px top-[187px] w-[465px] h-[46px] border-8 border-[#eb0000]" />
    <div className="absolute left-[487px] top-[173px] size-[80px] rounded-full bg-[#ff0000] flex items-center justify-center text-white font-bold text-[54px] font-['Noto_Sans',sans-serif]">
      2
    </div>
  </div>
);

/* ---------- order dialog ---------- */

const sunken = 'border-2 border-t-[#808080] border-l-[#808080] border-b-white border-r-white shadow-[inset_2px_2px_#404040,inset_-2px_-2px_#e3e3e3]';
const raised = 'bg-[#e3e3e3] border-2 border-t-white border-l-white border-b-[#404040] border-r-[#404040] shadow-[inset_-2px_-2px_#808080]';

const Field = ({ id, label, children }: { id: string; label: string; children: ReactNode }) => (
  <div className="flex items-center h-[40px]">
    <label htmlFor={id} className="w-[177px] mr-[18px] text-right whitespace-nowrap [font-feature-settings:'palt']">
      {label}
    </label>
    {children}
  </div>
);

const Dropdown = ({ id, value, className }: { id: string; value: string; className: string }) => (
  <div className={clsx('relative h-[40px]', className)}>
    <select id={id} className={clsx('appearance-none w-full h-full pl-1 bg-white text-[22px]', sunken)}>
      <option>{value}</option>
    </select>
    <span className={clsx('absolute right-1 top-1 w-[32px] h-[32px] flex items-center justify-center pointer-events-none', raised)}>
      <Caret />
    </span>
  </div>
);

const Spinner = ({ id }: { id: string }) => (
  <div className={clsx('flex w-[206px] h-[38px] bg-white p-[2px]', sunken)}>
    <input id={id} defaultValue="0.000" className="w-[168px] text-right pr-1 text-[22px] bg-transparent outline-none" />
    <div className="flex-1 flex flex-col">
      {['増やす', '減らす'].map((l, i) => (
        <button key={l} aria-label={l} className={clsx('flex-1 flex items-center justify-center', raised)}>
          <Caret className={i === 0 ? 'rotate-180' : undefined} />
        </button>
      ))}
    </div>
  </div>
);

const tickLabels = ['135.615', '135.612', '135.608', '135.604', '135.600', '135.596', '135.592', '135.589', '', '135.581'];

const TickChart = () => (
  <div className={clsx('flex w-[600px] h-[656px] bg-white pl-[6px] pt-[6px]', sunken)}>
    <div className="relative w-[502px] h-[640px] border-2 border-black">
      <svg className="absolute inset-0 w-full h-full" viewBox="0 0 498 636" preserveAspectRatio="none" fill="none" shapeRendering="crispEdges" aria-hidden="true">
        <g stroke="#c8c8c8" strokeWidth="2" strokeDasharray="6 6">
          {[0, 1, 2, 3, 4, 5, 6, 7, 8].map((i) => (
            <path key={i} d={`M0 ${59 + i * 64}H498`} />
          ))}
          {[0, 1, 2, 3, 4, 5, 6].map((i) => (
            <path key={i} d={`M${65 + i * 64} 0V636`} />
          ))}
        </g>
        <polyline points={toTickPoints(askTicks)} stroke="#ff5f5f" strokeWidth="2" />
        <polyline points={toTickPoints(bidTicks)} stroke="#0f5fff" strokeWidth="2" />
      </svg>
      <span className="relative pl-[3px] text-[20px] leading-[26px]">USDJPY</span>
    </div>
    <div className="relative pt-[29px] text-[17px] leading-[22px]">
      {tickLabels.map((t, i) => (
        <div key={i} className={clsx('flex items-center gap-[9px]', i < 8 ? 'h-[64px]' : i === 8 ? 'h-[58px]' : 'h-[66px]')}>
          <span className="w-[2px] h-[2px] bg-black" />
          {t}
        </div>
      ))}
      <div className="absolute left-[4px] top-[210px] w-[78px] pl-[7px] bg-[#ff5f5f] text-white">135.606</div>
      <div className="absolute left-[4px] top-[562px] w-[78px] pl-[7px] bg-[#0f5fff] text-white">135.585</div>
    </div>
  </div>
);

const OrderDialog = () => (
  <div
    role="dialog"
    aria-label="オーダーの発注"
    className="absolute left-[1158px] top-[312px] w-[1506px] h-[754px] rounded-[20px] bg-[#e4e4e4] overflow-hidden text-[21px]"
  >
    <header className="relative h-[57px] flex items-center gap-4 pl-[16px] bg-[#e9e9e9] border-b-2 border-[#c4c4c4]">
      {[0, 1, 2].map((i) => (
        <span key={i} className="size-[24px] rounded-full bg-[#cfd1d0] border border-[#b0b2b1]" />
      ))}
      <h2 className="absolute inset-x-0 text-center font-bold text-[24px] text-[#a9a9a9]">オーダーの発注</h2>
    </header>
    <div className="flex pt-[25px] pl-[16px]">
      <TickChart />
      <div className="flex-1 pl-[14px]">
        <form className="flex flex-col gap-3">
          <Field id="symbol" label="通貨ペア：">
            <Dropdown id="symbol" value="USDJPY, US Dollar vs Japanese Yen" className="w-[645px]" />
          </Field>
          <Field id="volume" label="数量：">
            <Dropdown id="volume" value="1.00" className="w-[210px]" />
          </Field>
          <div className="flex items-center h-[40px]">
            <Field id="sl" label="決済逆指値(S/L)">
              <Spinner id="sl" />
            </Field>
            <label htmlFor="tp" className="w-[212px] mr-4 text-right">決済指値(T/P)</label>
            <Spinner id="tp" />
          </div>
          <Field id="comment" label="コメント：">
            <input id="comment" className={clsx('w-[645px] h-[40px] px-[6px] bg-white outline-none', sunken)} />
          </Field>
          <Field id="kind" label="注文種別：">
            <Dropdown id="kind" value="成行注文" className="w-[645px]" />
          </Field>
        </form>
        <fieldset className="mt-[18px] w-[854px] h-[388px] pl-[28px] pr-[26px] border-2 border-[#808080] shadow-[2px_2px_#fff]">
          <legend className="-ml-[16px] px-1 leading-[24px]">成行注文</legend>
          <p className="mt-[30px] h-[84px] text-center text-[52px] leading-[84px] whitespace-pre font-['Noto_Sans',sans-serif]">
            135.58<span className="text-[40px]">5</span> / 135.60<span className="text-[40px]">6</span>
          </p>
          <div className="mt-6 flex gap-[44px]">
            <button className="flex-1 h-[46px] bg-[#ff8080] border-2 border-t-[#ffb8b8] border-l-[#ffb8b8] border-b-[#c04040] border-r-[#c04040] shadow-[inset_-2px_-2px_#e06060]">
              成行売り
            </button>
            <button className="flex-1 h-[46px] bg-[#a0c0ff] border-2 border-t-[#d8f8ff] border-l-[#d8f8ff] border-b-[#6080c0] border-r-[#6080c0] shadow-[inset_-2px_-2px_#80a0e0]">
              成行買い
            </button>
          </div>
          <button
            aria-label="ワンクリック"
            className="mt-[14px] w-full h-[46px] border-2 border-t-white border-l-white border-b-[#404040] border-r-[#404040] shadow-[inset_-2px_-2px_#808080] bg-[repeating-conic-gradient(#ffff8c_0_25%,#e8e4d4_0_50%)] bg-[length:4px_4px]"
          />
          <p className="mt-[22px] text-center leading-[26px] [font-feature-settings:'palt']">
            ご注意！ 成行注文は、市場状況によって約定価格が決まりますので、必ずしも提示価格で
            <br />
            約定するとは限りません!
          </p>
        </fieldset>
      </div>
    </div>
  </div>
);

/* ---------- status bar ---------- */

const StatusBar = () => {
  const cells = ['w-[255px]', 'w-[237px]', 'w-[164px]', 'w-[163px]', 'w-[162px]', 'w-[162px]', 'w-[158px]'];
  return (
    <footer className="h-[46px] shrink-0 flex items-center pt-[2px] border-t-2 border-white text-[23px]">
      <div className="flex-1 pl-1 text-[20px] [font-feature-settings:'palt']">コントラクトのプロパティ</div>
      {cells.map((w, i) => (
        <div key={i} className={clsx('h-[36px] shrink-0 flex items-center pl-[6px] border-l-2 border-[#808080] shadow-[inset_2px_0_#fff]', w)}>
          {i === 0 && 'Default'}
        </div>
      ))}
      <div className="relative w-[319px] h-[36px] shrink-0 flex items-center gap-2 pl-[8px] border-l-2 border-[#808080] shadow-[inset_2px_0_#fff]">
        <svg width="46" height="26" viewBox="0 0 46 26" aria-hidden="true">
          {[0, 1, 2, 3, 4, 5, 6, 7].map((i) => (
            <g key={i}>
              <rect x={i * 6} y="0" width="4" height={18 - i * 2} fill="#5c7a00" />
              <rect x={i * 6} y={20 - i * 2} width="4" height={6 + i * 2} fill="#043c5c" />
            </g>
          ))}
        </svg>
        9034/5 kb
        <svg width="34" height="34" viewBox="0 0 34 34" className="ml-auto self-end" aria-hidden="true">
          <path d="M2 34L34 2M12 34L34 12M22 34L34 22" stroke="#808080" strokeWidth="3" />
          <path d="M6 34L34 6M16 34L34 16M26 34L34 26" stroke="#fff" strokeWidth="2" />
        </svg>
      </div>
    </footer>
  );
};

export default function App() {
  return (
    <div className="relative h-screen flex flex-col overflow-hidden bg-[#e3e3e3] text-black text-[22px] leading-[26px] font-['DejaVu_Sans_Condensed','Noto_Sans','Noto_Sans_CJK_JP',sans-serif]">
      <MenuBar />
      <Toolbar />
      <LineToolbar />
      <div className="flex-1 flex min-h-0">
        <aside className="w-[498px] shrink-0 flex flex-col border-t-2 border-b-2 border-[#808080] shadow-[inset_0_2px_#fff]">
          <MarketWatch />
          <Navigator />
        </aside>
        <MainChart />
      </div>
      <StatusBar />
      <OrderDialog />
      <ContextMenu />
    </div>
  );
}
